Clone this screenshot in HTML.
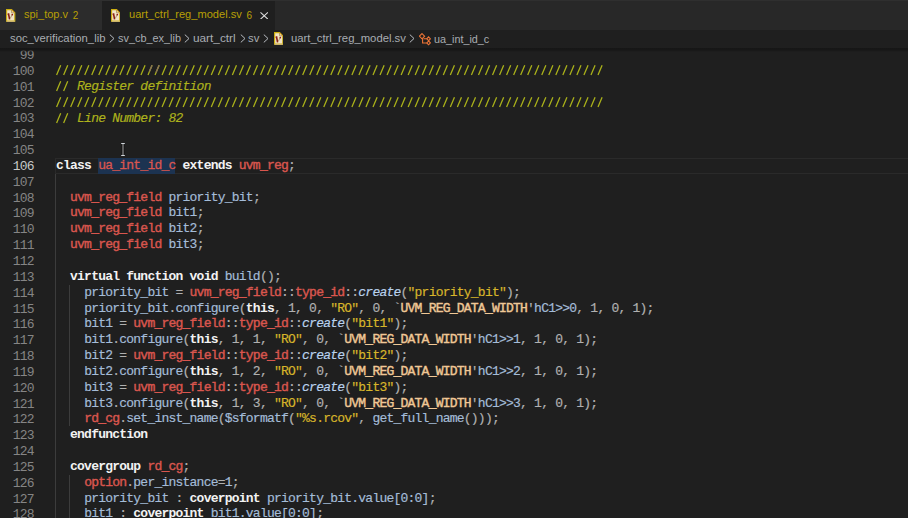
<!DOCTYPE html>
<html><head><meta charset="utf-8">
<style>
html,body{margin:0;padding:0;width:908px;height:518px;overflow:hidden;background:#1f1f1f;}
*{box-sizing:border-box;}
.ui{font-family:"Liberation Sans",sans-serif;}
#tabs{position:absolute;left:0;top:0;width:908px;height:29.5px;background:#282828;}
#topline{position:absolute;left:0;top:0;width:908px;height:1px;background:#2f2f2f;}
.tab{position:absolute;top:0;height:29.5px;font-family:"Liberation Sans",sans-serif;font-size:11px;color:#b89f05;white-space:pre;}
#t1{left:0;width:101.6px;background:#2c2c2c;}
#t2{left:102px;width:173.4px;background:#1f1f1f;}
.tab .lbl{position:absolute;top:8px;line-height:13px;}
.ficon{position:absolute;}
#crumbs{position:absolute;left:0;top:30px;width:908px;height:17.5px;background:#1f1f1f;font-family:"Liberation Sans",sans-serif;font-size:11px;color:#a9adb2;white-space:pre;}
#crumbs span{position:absolute;top:1.1px;line-height:15px;font-size:11.3px;}
#shadow{position:absolute;left:0;top:47.6px;width:908px;height:4px;background:linear-gradient(#161616 0%,#171717 50%,rgba(31,31,31,0) 100%);}
#editor{position:absolute;left:0;top:47.4px;width:908px;height:480px;font-family:"Liberation Mono",monospace;font-size:13px;letter-spacing:-0.771px;}
.ln{position:absolute;left:0;width:33.9px;text-align:right;color:#858585;height:15.84px;line-height:15.84px;white-space:pre;}
.cl{-webkit-text-stroke:0.18px currentColor;position:absolute;left:56px;height:15.84px;line-height:15.84px;white-space:pre;color:#c8c8c8;}
.c{color:#adb21c;font-style:italic;}
.k{color:#f2f2f2;font-weight:bold;-webkit-text-stroke:0;}
.t{color:#d9564e;-webkit-text-stroke:0.42px currentColor;}
.tn{color:#d9564e;-webkit-text-stroke:0.3px currentColor;}
.i{color:#a4bcd8;}
.s{color:#d7b52a;}
.p{color:#b0b0b0;}
.m{color:#f0c896;-webkit-text-stroke:0.42px currentColor;}
.f{color:#b9d2ee;font-style:italic;}
.ln.cur{color:#c8c8c8;}
.guide{position:absolute;width:1px;background:#3c3c3c;}
</style></head><body>
<div id="tabs">
  <div class="tab" id="t1">
    <svg class="ficon" style="left:6.2px;top:8.9px" width="9.4" height="12.8" viewBox="0 0 9.4 12.8"><path d="M0.6 0.6H5.6L8.8 3.8V12.2H0.6Z" fill="#f1e4c6" stroke="#cdb010" stroke-width="1.15"/><path d="M0.6 12.2H8.8" stroke="#d8c08a" stroke-width="1"/><path d="M5.5 0.7V3.8H8.7" fill="none" stroke="#a88a50" stroke-width="0.75"/><path d="M5.6 0.6L8.8 3.8" stroke="#e09a20" stroke-width="0.8"/><path d="M1.6 5.6L2.6 5.2L3.6 10.3" stroke="#861c14" stroke-width="1.6" fill="none"/><path d="M4.4 9.2L6.0 5.9" stroke="#7a6040" stroke-width="0.6"/><circle cx="6.3" cy="5.6" r="0.85" fill="#8e1c14"/></svg>
    <span class="lbl" style="left:24px">spi_top.v</span><span class="lbl" style="left:72.8px;font-size:10px;top:9px">2</span>
  </div>
  <div class="tab" id="t2">
    <svg class="ficon" style="left:8.9px;top:8.9px" width="9.4" height="12.8" viewBox="0 0 9.4 12.8"><path d="M0.6 0.6H5.6L8.8 3.8V12.2H0.6Z" fill="#f1e4c6" stroke="#cdb010" stroke-width="1.15"/><path d="M0.6 12.2H8.8" stroke="#d8c08a" stroke-width="1"/><path d="M5.5 0.7V3.8H8.7" fill="none" stroke="#a88a50" stroke-width="0.75"/><path d="M5.6 0.6L8.8 3.8" stroke="#e09a20" stroke-width="0.8"/><path d="M1.6 5.6L2.6 5.2L3.6 10.3" stroke="#861c14" stroke-width="1.6" fill="none"/><path d="M4.4 9.2L6.0 5.9" stroke="#7a6040" stroke-width="0.6"/><circle cx="6.3" cy="5.6" r="0.85" fill="#8e1c14"/></svg>
    <span class="lbl" style="left:27px;font-size:11.1px">uart_ctrl_reg_model.sv</span><span class="lbl" style="left:144.5px;font-size:10px;top:9px">6</span>
    <svg class="ficon" style="left:157.7px;top:11.7px" width="8.4" height="7.6" viewBox="0 0 8.4 7.6"><path d="M0.5 0.4L7.9 7.2M7.9 0.4L0.5 7.2" stroke="#dcdcdc" stroke-width="1.05"/></svg>
  </div>
</div>
<div id="topline"></div>
<div id="crumbs">
  <span style="left:10px">soc_verification_lib</span>
  <svg class="ficon" style="left:109px;top:4px" width="6" height="9" viewBox="0 0 6 9"><path d="M0.8 0.6L5 4.5L0.8 8.4" stroke="#b8bcc2" stroke-width="1" fill="none"/></svg>
  <span style="left:118px;font-size:10.9px">sv_cb_ex_lib</span>
  <svg class="ficon" style="left:184px;top:4px" width="6" height="9" viewBox="0 0 6 9"><path d="M0.8 0.6L5 4.5L0.8 8.4" stroke="#b8bcc2" stroke-width="1" fill="none"/></svg>
  <span style="left:193px;font-size:11.8px;top:0.6px">uart_ctrl</span>
  <svg class="ficon" style="left:240px;top:4px" width="6" height="9" viewBox="0 0 6 9"><path d="M0.8 0.6L5 4.5L0.8 8.4" stroke="#b8bcc2" stroke-width="1" fill="none"/></svg>
  <span style="left:248px">sv</span>
  <svg class="ficon" style="left:262.5px;top:4px" width="6" height="9" viewBox="0 0 6 9"><path d="M0.8 0.6L5 4.5L0.8 8.4" stroke="#b8bcc2" stroke-width="1" fill="none"/></svg>
  <svg class="ficon" style="left:273.6px;top:2px" width="9.4" height="12.8" viewBox="0 0 9.4 12.8"><path d="M0.6 0.6H5.6L8.8 3.8V12.2H0.6Z" fill="#f1e4c6" stroke="#cdb010" stroke-width="1.15"/><path d="M0.6 12.2H8.8" stroke="#d8c08a" stroke-width="1"/><path d="M5.5 0.7V3.8H8.7" fill="none" stroke="#a88a50" stroke-width="0.75"/><path d="M5.6 0.6L8.8 3.8" stroke="#e09a20" stroke-width="0.8"/><path d="M1.6 5.6L2.6 5.2L3.6 10.3" stroke="#861c14" stroke-width="1.6" fill="none"/><path d="M4.4 9.2L6.0 5.9" stroke="#7a6040" stroke-width="0.6"/><circle cx="6.3" cy="5.6" r="0.85" fill="#8e1c14"/></svg>
  <span style="left:291px">uart_ctrl_reg_model.sv</span>
  <svg class="ficon" style="left:409px;top:4px" width="6" height="9" viewBox="0 0 6 9"><path d="M0.8 0.6L5 4.5L0.8 8.4" stroke="#b8bcc2" stroke-width="1" fill="none"/></svg>
  <svg class="ficon" style="left:419px;top:3px" width="12" height="13" viewBox="0 0 12 13"><g stroke="#ec7436" fill="none" stroke-width="1.1"><path d="M3 0.6L5.6 3.2L3 5.8L0.4 3.2Z"/><path d="M9.6 3.9L11.4 5.8L9.6 7.7L7.8 5.8Z"/><path d="M9.6 8L11.4 9.9L9.6 11.8L7.8 9.9Z"/><path d="M4.6 5.8H7.8M3.6 5.6V10H7.8"/></g></svg>
  <span style="left:434px;font-size:10.8px;top:1.9px">ua_int_id_c</span>
</div>
<div id="editor">
<div style="position:absolute;left:55px;top:110.9px;width:853px;height:15.84px;border-top:1.5px solid #2a2a2a;border-bottom:1.5px solid #2a2a2a;border-left:1.5px solid #2a2a2a"></div>
<div style="position:absolute;left:98px;top:110.9px;width:77.3px;height:15.84px;background:#1c3351"></div>
<div class="guide" style="left:55.0px;top:126.6px;height:353.4px"></div>
<div class="guide" style="left:69.0px;top:237.6px;height:141.5px"></div>
<div class="guide" style="left:69.0px;top:427.6px;height:52.4px"></div>
<div class="ln" style="top:0.70px">99</div>
<div class="ln" style="top:16.54px">100</div>
<svg style="position:absolute;left:0;top:15.84px" width="908" height="15.8"><path d="M56.60 11.90L60.70 2.20M63.63 11.90L67.73 2.20M70.66 11.90L74.76 2.20M77.69 11.90L81.79 2.20M84.72 11.90L88.83 2.20M91.76 11.90L95.86 2.20M98.79 11.90L102.89 2.20M105.82 11.90L109.92 2.20M112.85 11.90L116.95 2.20M119.88 11.90L123.98 2.20M126.91 11.90L131.01 2.20M133.94 11.90L138.04 2.20M140.97 11.90L145.07 2.20M148.01 11.90L152.11 2.20M155.04 11.90L159.14 2.20M162.07 11.90L166.17 2.20M169.10 11.90L173.20 2.20M176.13 11.90L180.23 2.20M183.16 11.90L187.26 2.20M190.19 11.90L194.29 2.20M197.22 11.90L201.32 2.20M204.26 11.90L208.36 2.20M211.29 11.90L215.39 2.20M218.32 11.90L222.42 2.20M225.35 11.90L229.45 2.20M232.38 11.90L236.48 2.20M239.41 11.90L243.51 2.20M246.44 11.90L250.54 2.20M253.47 11.90L257.57 2.20M260.51 11.90L264.61 2.20M267.54 11.90L271.64 2.20M274.57 11.90L278.67 2.20M281.60 11.90L285.70 2.20M288.63 11.90L292.73 2.20M295.66 11.90L299.76 2.20M302.69 11.90L306.79 2.20M309.73 11.90L313.82 2.20M316.76 11.90L320.86 2.20M323.79 11.90L327.89 2.20M330.82 11.90L334.92 2.20M337.85 11.90L341.95 2.20M344.88 11.90L348.98 2.20M351.91 11.90L356.01 2.20M358.94 11.90L363.04 2.20M365.98 11.90L370.07 2.20M373.01 11.90L377.11 2.20M380.04 11.90L384.14 2.20M387.07 11.90L391.17 2.20M394.10 11.90L398.20 2.20M401.13 11.90L405.23 2.20M408.16 11.90L412.26 2.20M415.19 11.90L419.29 2.20M422.23 11.90L426.32 2.20M429.26 11.90L433.36 2.20M436.29 11.90L440.39 2.20M443.32 11.90L447.42 2.20M450.35 11.90L454.45 2.20M457.38 11.90L461.48 2.20M464.41 11.90L468.51 2.20M471.44 11.90L475.54 2.20M478.48 11.90L482.57 2.20M485.51 11.90L489.61 2.20M492.54 11.90L496.64 2.20M499.57 11.90L503.67 2.20M506.60 11.90L510.70 2.20M513.63 11.90L517.73 2.20M520.66 11.90L524.76 2.20M527.69 11.90L531.79 2.20M534.73 11.90L538.83 2.20M541.76 11.90L545.86 2.20M548.79 11.90L552.89 2.20M555.82 11.90L559.92 2.20M562.85 11.90L566.95 2.20M569.88 11.90L573.98 2.20M576.91 11.90L581.01 2.20M583.94 11.90L588.04 2.20M590.98 11.90L595.08 2.20M598.01 11.90L602.11 2.20" stroke="#a9b01a" stroke-width="1.3" fill="none"/><path d="M149.41 8.6L152.01 2.2M156.04 9.5L159.04 2.2" stroke="#8a7457" stroke-width="1.35"/></svg>
<div class="ln" style="top:32.38px">101</div>
<svg style="position:absolute;left:0;top:31.68px" width="908" height="15.8"><path d="M56.60 11.90L60.70 2.20M63.63 11.90L67.73 2.20" stroke="#a9b01a" stroke-width="1.3" fill="none"/></svg>
<div class="cl" style="top:31.98px"><span class="c">   Register definition</span></div>
<div class="ln" style="top:48.22px">102</div>
<svg style="position:absolute;left:0;top:47.52px" width="908" height="15.8"><path d="M56.60 11.90L60.70 2.20M63.63 11.90L67.73 2.20M70.66 11.90L74.76 2.20M77.69 11.90L81.79 2.20M84.72 11.90L88.83 2.20M91.76 11.90L95.86 2.20M98.79 11.90L102.89 2.20M105.82 11.90L109.92 2.20M112.85 11.90L116.95 2.20M119.88 11.90L123.98 2.20M126.91 11.90L131.01 2.20M133.94 11.90L138.04 2.20M140.97 11.90L145.07 2.20M148.01 11.90L152.11 2.20M155.04 11.90L159.14 2.20M162.07 11.90L166.17 2.20M169.10 11.90L173.20 2.20M176.13 11.90L180.23 2.20M183.16 11.90L187.26 2.20M190.19 11.90L194.29 2.20M197.22 11.90L201.32 2.20M204.26 11.90L208.36 2.20M211.29 11.90L215.39 2.20M218.32 11.90L222.42 2.20M225.35 11.90L229.45 2.20M232.38 11.90L236.48 2.20M239.41 11.90L243.51 2.20M246.44 11.90L250.54 2.20M253.47 11.90L257.57 2.20M260.51 11.90L264.61 2.20M267.54 11.90L271.64 2.20M274.57 11.90L278.67 2.20M281.60 11.90L285.70 2.20M288.63 11.90L292.73 2.20M295.66 11.90L299.76 2.20M302.69 11.90L306.79 2.20M309.73 11.90L313.82 2.20M316.76 11.90L320.86 2.20M323.79 11.90L327.89 2.20M330.82 11.90L334.92 2.20M337.85 11.90L341.95 2.20M344.88 11.90L348.98 2.20M351.91 11.90L356.01 2.20M358.94 11.90L363.04 2.20M365.98 11.90L370.07 2.20M373.01 11.90L377.11 2.20M380.04 11.90L384.14 2.20M387.07 11.90L391.17 2.20M394.10 11.90L398.20 2.20M401.13 11.90L405.23 2.20M408.16 11.90L412.26 2.20M415.19 11.90L419.29 2.20M422.23 11.90L426.32 2.20M429.26 11.90L433.36 2.20M436.29 11.90L440.39 2.20M443.32 11.90L447.42 2.20M450.35 11.90L454.45 2.20M457.38 11.90L461.48 2.20M464.41 11.90L468.51 2.20M471.44 11.90L475.54 2.20M478.48 11.90L482.57 2.20M485.51 11.90L489.61 2.20M492.54 11.90L496.64 2.20M499.57 11.90L503.67 2.20M506.60 11.90L510.70 2.20M513.63 11.90L517.73 2.20M520.66 11.90L524.76 2.20M527.69 11.90L531.79 2.20M534.73 11.90L538.83 2.20M541.76 11.90L545.86 2.20M548.79 11.90L552.89 2.20M555.82 11.90L559.92 2.20M562.85 11.90L566.95 2.20M569.88 11.90L573.98 2.20M576.91 11.90L581.01 2.20M583.94 11.90L588.04 2.20M590.98 11.90L595.08 2.20M598.01 11.90L602.11 2.20" stroke="#a9b01a" stroke-width="1.3" fill="none"/></svg>
<div class="ln" style="top:64.06px">103</div>
<svg style="position:absolute;left:0;top:63.36px" width="908" height="15.8"><path d="M56.60 11.90L60.70 2.20M63.63 11.90L67.73 2.20" stroke="#a9b01a" stroke-width="1.3" fill="none"/></svg>
<div class="cl" style="top:63.66px"><span class="c">   Line Number: 82</span></div>
<div class="ln" style="top:79.90px">104</div>
<div class="ln" style="top:95.74px">105</div>
<div class="ln cur" style="top:111.58px">106</div>
<div class="cl" style="top:110.58px"><span class="k">class</span><span class="p"> </span><span class="tn">ua_int_id_c</span><span class="p"> </span><span class="k">extends</span><span class="p"> </span><span class="t">uvm_reg</span><span class="p">;</span></div>
<div class="ln" style="top:127.42px">107</div>
<div class="ln" style="top:143.26px">108</div>
<div class="cl" style="top:142.26px"><span class="p">  </span><span class="t">uvm_reg_field</span><span class="p"> </span><span class="i">priority_bit</span><span class="p">;</span></div>
<div class="ln" style="top:159.10px">109</div>
<div class="cl" style="top:158.10px"><span class="p">  </span><span class="t">uvm_reg_field</span><span class="p"> </span><span class="i">bit1</span><span class="p">;</span></div>
<div class="ln" style="top:174.94px">110</div>
<div class="cl" style="top:173.94px"><span class="p">  </span><span class="t">uvm_reg_field</span><span class="p"> </span><span class="i">bit2</span><span class="p">;</span></div>
<div class="ln" style="top:190.78px">111</div>
<div class="cl" style="top:189.78px"><span class="p">  </span><span class="t">uvm_reg_field</span><span class="p"> </span><span class="i">bit3</span><span class="p">;</span></div>
<div class="ln" style="top:206.62px">112</div>
<div class="ln" style="top:222.46px">113</div>
<div class="cl" style="top:221.46px"><span class="p">  </span><span class="k">virtual</span><span class="p"> </span><span class="k">function</span><span class="p"> </span><span class="k">void</span><span class="p"> </span><span class="i">build</span><span class="p">();</span></div>
<div class="ln" style="top:238.30px">114</div>
<div class="cl" style="top:237.30px"><span class="p">    </span><span class="i">priority_bit</span><span class="p"> = </span><span class="t">uvm_reg_field</span><span class="p">::</span><span class="t">type_id</span><span class="p">::</span><span class="f">create</span><span class="p">(</span><span class="s">"priority_bit"</span><span class="p">);</span></div>
<div class="ln" style="top:254.14px">115</div>
<div class="cl" style="top:253.14px"><span class="p">    </span><span class="i">priority_bit</span><span class="p">.</span><span class="i">configure</span><span class="p">(</span><span class="k">this</span><span class="p">, 1, 0, </span><span class="s">"RO"</span><span class="p">, 0, `</span><span class="m">UVM_REG_DATA_WIDTH</span><span class="p">'</span><span class="i">hC1&gt;&gt;0</span><span class="p">, 1, 0, 1);</span></div>
<div class="ln" style="top:269.98px">116</div>
<div class="cl" style="top:268.98px"><span class="p">    </span><span class="i">bit1</span><span class="p"> = </span><span class="t">uvm_reg_field</span><span class="p">::</span><span class="t">type_id</span><span class="p">::</span><span class="f">create</span><span class="p">(</span><span class="s">"bit1"</span><span class="p">);</span></div>
<div class="ln" style="top:285.82px">117</div>
<div class="cl" style="top:284.82px"><span class="p">    </span><span class="i">bit1</span><span class="p">.</span><span class="i">configure</span><span class="p">(</span><span class="k">this</span><span class="p">, 1, 1, </span><span class="s">"RO"</span><span class="p">, 0, `</span><span class="m">UVM_REG_DATA_WIDTH</span><span class="p">'</span><span class="i">hC1&gt;&gt;1</span><span class="p">, 1, 0, 1);</span></div>
<div class="ln" style="top:301.66px">118</div>
<div class="cl" style="top:300.66px"><span class="p">    </span><span class="i">bit2</span><span class="p"> = </span><span class="t">uvm_reg_field</span><span class="p">::</span><span class="t">type_id</span><span class="p">::</span><span class="f">create</span><span class="p">(</span><span class="s">"bit2"</span><span class="p">);</span></div>
<div class="ln" style="top:317.50px">119</div>
<div class="cl" style="top:316.50px"><span class="p">    </span><span class="i">bit2</span><span class="p">.</span><span class="i">configure</span><span class="p">(</span><span class="k">this</span><span class="p">, 1, 2, </span><span class="s">"RO"</span><span class="p">, 0, `</span><span class="m">UVM_REG_DATA_WIDTH</span><span class="p">'</span><span class="i">hC1&gt;&gt;2</span><span class="p">, 1, 0, 1);</span></div>
<div class="ln" style="top:333.34px">120</div>
<div class="cl" style="top:332.34px"><span class="p">    </span><span class="i">bit3</span><span class="p"> = </span><span class="t">uvm_reg_field</span><span class="p">::</span><span class="t">type_id</span><span class="p">::</span><span class="f">create</span><span class="p">(</span><span class="s">"bit3"</span><span class="p">);</span></div>
<div class="ln" style="top:349.18px">121</div>
<div class="cl" style="top:348.18px"><span class="p">    </span><span class="i">bit3</span><span class="p">.</span><span class="i">configure</span><span class="p">(</span><span class="k">this</span><span class="p">, 1, 3, </span><span class="s">"RO"</span><span class="p">, 0, `</span><span class="m">UVM_REG_DATA_WIDTH</span><span class="p">'</span><span class="i">hC1&gt;&gt;3</span><span class="p">, 1, 0, 1);</span></div>
<div class="ln" style="top:365.02px">122</div>
<div class="cl" style="top:364.02px"><span class="p">    </span><span class="t">rd_cg</span><span class="p">.</span><span class="i">set_inst_name</span><span class="p">(</span><span class="i">$sformatf</span><span class="p">(</span><span class="s">"%s.rcov"</span><span class="p">, </span><span class="i">get_full_name</span><span class="p">()));</span></div>
<div class="ln" style="top:380.86px">123</div>
<div class="cl" style="top:379.86px"><span class="p">  </span><span class="k">endfunction</span></div>
<div class="ln" style="top:396.70px">124</div>
<div class="ln" style="top:412.54px">125</div>
<div class="cl" style="top:411.54px"><span class="p">  </span><span class="k">covergroup</span><span class="p"> </span><span class="t">rd_cg</span><span class="p">;</span></div>
<div class="ln" style="top:428.38px">126</div>
<div class="cl" style="top:427.38px"><span class="p">    </span><span class="t">option</span><span class="p">.</span><span class="i">per_instance</span><span class="p">=</span><span class="i">1</span><span class="p">;</span></div>
<div class="ln" style="top:444.22px">127</div>
<div class="cl" style="top:443.22px"><span class="p">    </span><span class="i">priority_bit</span><span class="p"> : </span><span class="k">coverpoint</span><span class="p"> </span><span class="i">priority_bit.value[0:0]</span><span class="p">;</span></div>
<div class="ln" style="top:460.06px">128</div>
<div class="cl" style="top:459.06px"><span class="p">    </span><span class="i">bit1</span><span class="p"> : </span><span class="k">coverpoint</span><span class="p"> </span><span class="i">bit1.value[0:0]</span><span class="p">;</span></div>
<div class="ln" style="top:475.90px">129</div>
<div class="cl" style="top:474.90px"><span class="p">    </span><span class="i">bit2</span><span class="p"> : </span><span class="k">coverpoint</span><span class="p"> </span><span class="i">bit2.value[0:0]</span><span class="p">;</span></div>
<svg style="position:absolute;left:120px;top:95.6px" width="6" height="14" viewBox="0 0 6 14"><path d="M3 1.2V11.8" stroke="#000" stroke-width="2.4"/><path d="M1.2 0.5H4.8M1.2 12.5H4.8" stroke="#d0d6dc" stroke-width="1"/><path d="M3 1V12" stroke="#9a9a9a" stroke-width="1.2"/></svg>
</div>
<div id="shadow"></div>
</body></html>
